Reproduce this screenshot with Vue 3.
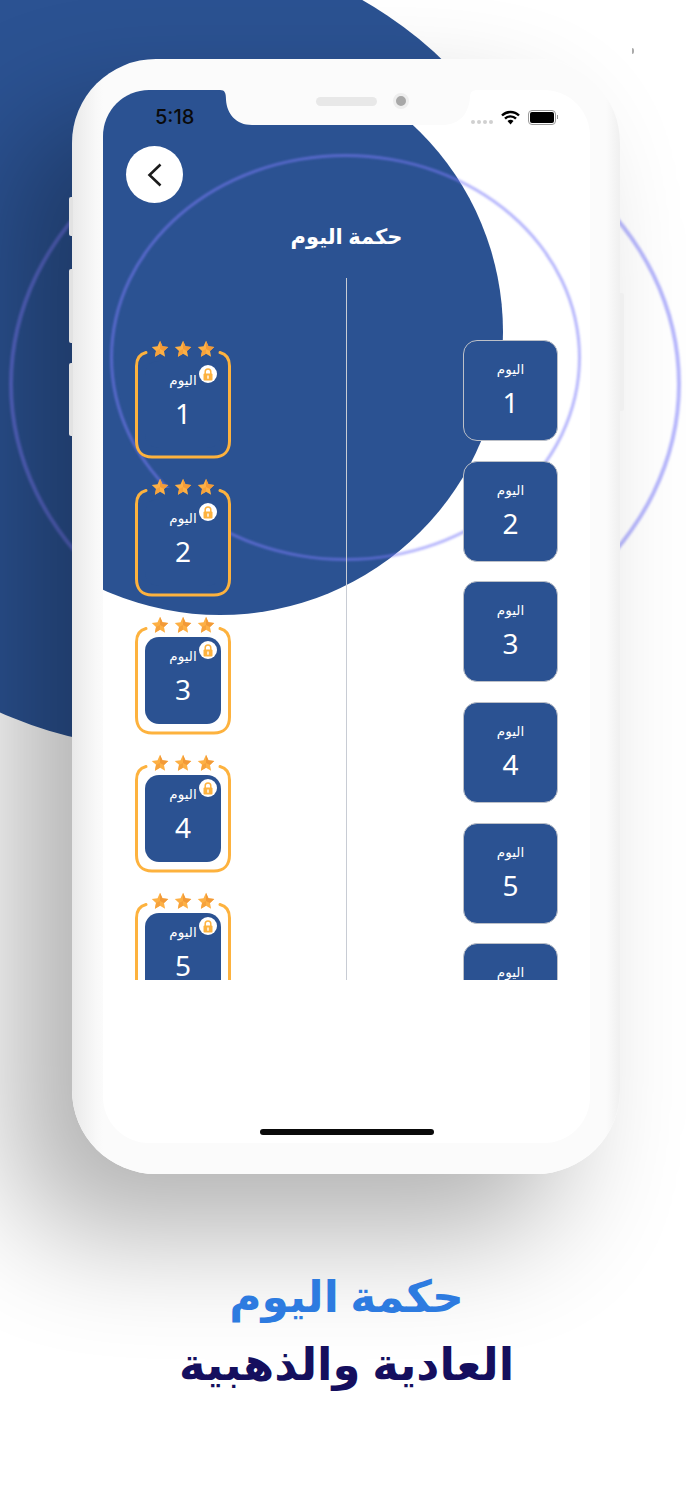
<script setup>
const golden = [1, 2, 3, 4, 5]
const regular = [1, 2, 3, 4, 5, 6]
</script>

<template>
  <div class="poster">
    <div class="big-circle"></div>
    <div class="ring-outer"></div>
    <div class="speck"></div>

    <div class="phone">
      <span class="side-btn btn-a"></span>
      <span class="side-btn btn-b"></span>
      <span class="side-btn btn-c"></span>
      <span class="side-btn btn-d"></span>

      <div class="screen">
        <div class="screen-circle"></div>
        <div class="ring-inner"></div>

        <svg class="notch" width="262" height="36" viewBox="0 0 262 36">
          <path d="M0 0H258C252 0 250 2 250 8C248 26 238 35 222 35H32C16 35 7 24 6 10C6 3 5 0 0 0Z" fill="#fbfbfb" />
        </svg>
        <span class="speaker"></span>
        <span class="camera"></span>

        <div class="status">
          <span class="time">5:18</span>
          <div class="status-right">
            <span class="signal"><i></i><i></i><i></i><i></i></span>
            <svg width="19" height="15" viewBox="0 0 19 15">
              <path d="M1 5.500a12 12 0 0 1 17 0" fill="none" stroke="#000" stroke-width="2.400" />
              <path d="M4 8.700a7.600 7.600 0 0 1 11 0" fill="none" stroke="#000" stroke-width="2.400" />
              <path d="M6.500 11a4 4 0 0 1 6 0L9.500 14.500Z" fill="#000" />
            </svg>
            <span class="battery"><i></i></span>
          </div>
        </div>

        <button class="back">
          <svg width="16" height="24" viewBox="0 0 16 24">
            <path d="M13.500 1.500L2.500 12L13.500 22.500" fill="none" stroke="#1c1c1c" stroke-width="2.600" />
          </svg>
        </button>

        <h1 class="title">حكمة اليوم</h1>

        <div class="columns">
          <div class="col-left">
            <div v-for="d in golden" :key="d" class="gold-card" :class="{ 'on-circle': d < 3 }">
              <svg class="frame" width="96" height="109" viewBox="0 0 96 109">
                <path d="M11 2.500C5 4 1.500 9 1.500 16V91C1.500 101 7 107 17 107H79C89 107 94.500 101 94.500 91V16C94.500 9 91 4 85 2.500" fill="none" stroke="#fdb23e" stroke-width="3" stroke-linecap="round" />
              </svg>
              <div class="stars">
                <svg v-for="s in 3" :key="s" width="18" height="18" viewBox="0 0 24 24">
                  <path d="M12 1l3.300 7.300 7.700.9-5.700 5.300 1.500 7.800L12 18.400l-6.800 3.900 1.500-7.800L1 9.200l7.700-.9z" fill="#fdb045" />
                  <path d="M12 1l3.300 7.300 7.700.9-5.700 5.300L12 12z" fill="#f29a38" />
                  <path d="M12 12l-5.300 2.500-1.500 7.800 6.800-3.900z" fill="#f6a23c" />
                </svg>
              </div>
              <div class="day gold-day">
                <span class="lock">
                  <svg width="10" height="13" viewBox="0 0 10 13">
                    <path d="M2.200 6V3.700a2.800 2.800 0 0 1 5.600 0V6" fill="none" stroke="#fdb23e" stroke-width="1.500" />
                    <rect x="0.500" y="5.500" width="9" height="7" rx="1" fill="#fdb23e" />
                    <rect x="4.300" y="7.500" width="1.400" height="3.200" fill="#fff" />
                  </svg>
                </span>
                <span class="day-label">اليوم</span>
                <span class="day-num">{{ d }}</span>
              </div>
            </div>
          </div>
          <div class="divider"></div>
          <div class="col-right">
            <div v-for="d in regular" :key="d" class="day plain-day">
              <span class="day-label">اليوم</span>
              <span v-if="d < 6" class="day-num">{{ d }}</span>
            </div>
          </div>
        </div>

        <div class="home-bar"></div>
      </div>
    </div>

    <div class="caption">
      <p class="cap-blue">حكمة اليوم</p>
      <p class="cap-dark">العادية والذهبية</p>
    </div>
  </div>
</template>

<style>
html,
body {
  margin: 0;
  background: #fff;
}
</style>

<style scoped>
.poster {
  position: relative;
  width: 693px;
  height: 1500px;
  overflow: hidden;
  background: #fff;
  padding-top: 59px;
  box-sizing: border-box;
  font-family: "Noto Sans", "DejaVu Sans", sans-serif;
}

.big-circle {
  position: absolute;
  left: -235px;
  top: -52px;
  width: 800px;
  height: 800px;
  border-radius: 50%;
  background: #2b5292;
}

.ring-outer {
  position: absolute;
  left: 9px;
  top: 98px;
  width: 664px;
  height: 564px;
  border: 4px solid rgba(123, 123, 250, 0.55);
  border-radius: 50%;
  filter: blur(1px);
}

.speck {
  position: absolute;
  left: 632px;
  top: 48px;
  width: 2px;
  height: 6px;
  background: #aaa;
  border-radius: 0 2px 2px 0;
}

.phone {
  position: relative;
  width: 548px;
  height: 1115px;
  margin-left: 72px;
  padding: 31px 30px 31px 31px;
  box-sizing: border-box;
  border-radius: 84px;
  background: linear-gradient(90deg, #e9e9e9 0, #f8f8f8 24px, #fbfbfb 31px, #fbfbfb calc(100% - 14px), #f0f0f0 100%);
  box-shadow: -60px 60px 120px rgba(0, 0, 0, 0.3);
}

.side-btn {
  position: absolute;
  left: -3px;
  width: 4px;
  background: #e2e2e2;
  border-radius: 2px 0 0 2px;
}

.btn-a {
  top: 138px;
  height: 39px;
}

.btn-b {
  top: 210px;
  height: 74px;
}

.btn-c {
  top: 304px;
  height: 73px;
}

.btn-d {
  left: auto;
  right: -4px;
  top: 234px;
  height: 118px;
  background: #efefef;
  border-radius: 0 2px 2px 0;
}

.screen {
  position: relative;
  height: 100%;
  border-radius: 46px;
  overflow: hidden;
  background: #fff;
}

.screen-circle {
  position: absolute;
  left: -166px;
  top: -41px;
  width: 566px;
  height: 566px;
  border-radius: 50%;
  background: #2b5292;
}

.ring-inner {
  position: absolute;
  left: 7px;
  top: 64px;
  width: 465px;
  height: 401px;
  border: 3px solid rgba(123, 123, 250, 0.55);
  border-radius: 50%;
  filter: blur(0.8px);
}

.notch {
  position: absolute;
  left: 117px;
  top: 0;
}

.speaker {
  position: absolute;
  left: 213px;
  top: 7px;
  width: 61px;
  height: 9px;
  border-radius: 5px;
  background: #e8e8e8;
}

.camera {
  position: absolute;
  left: 290px;
  top: 3px;
  width: 10px;
  height: 10px;
  border: 3px solid #eee;
  border-radius: 50%;
  background: #a8a8a8;
}

.status {
  position: relative;
  display: flex;
  justify-content: space-between;
  align-items: center;
  height: 38px;
  margin-top: 8px;
  padding: 0 31px 0 52px;
  box-sizing: border-box;
}

.time {
  font-family: Inter, sans-serif;
  font-size: 20px;
  font-weight: 500;
  color: #0a0a0a;
}

.status-right {
  display: flex;
  align-items: center;
  gap: 8px;
}

.signal {
  display: flex;
  gap: 2px;
  margin-top: 10px;
}

.signal i {
  width: 4px;
  height: 4px;
  background: #d0d0d0;
  border-radius: 50%;
}

.battery {
  position: relative;
  display: block;
  width: 24px;
  height: 11px;
  padding: 1px;
  border: 1px solid #999;
  border-radius: 4px;
  margin-right: 3px;
}

.battery::after {
  content: "";
  position: absolute;
  right: -3px;
  top: 4px;
  width: 1.500px;
  height: 4px;
  background: #999;
}

.battery i {
  display: block;
  height: 100%;
  background: #000;
  border-radius: 2px;
}

.back {
  position: relative;
  display: flex;
  align-items: center;
  justify-content: center;
  width: 57px;
  height: 57px;
  margin: 10px 0 0 23px;
  padding: 0;
  border: 0;
  border-radius: 50%;
  background: #fff;
}

.title {
  position: relative;
  margin: 15px 0 0;
  height: 36px;
  line-height: 36px;
  text-align: center;
  font-size: 21px;
  font-weight: 700;
  color: #fff;
}

.columns {
  position: relative;
  display: flex;
  height: 702px;
  margin-top: 24px;
  overflow: hidden;
}

.col-left {
  width: 243px;
  padding: 72px 0 0 32px;
  box-sizing: border-box;
}

.divider {
  flex: none;
  width: 1px;
  background: #c8ccd4;
}

.col-right {
  flex: 1;
  display: flex;
  flex-direction: column;
  align-items: flex-end;
  gap: 19.700px;
  padding: 62px 32px 0 0;
}

.gold-card {
  position: relative;
  width: 96px;
  height: 109px;
  margin-bottom: 29px;
  padding: 11px 10px;
  box-sizing: border-box;
  border-radius: 18px;
}

/* the ring stays behind the cards that sit on the blue circle */
.on-circle {
  background: #2b5292;
}

.frame {
  position: absolute;
  left: 0;
  top: 0;
}

.stars {
  position: absolute;
  left: 16px;
  top: -10px;
  display: flex;
  gap: 5px;
}

.day {
  position: relative;
  display: flex;
  flex-direction: column;
  align-items: center;
  box-sizing: border-box;
  background: #2b5292;
  color: #fff;
}

.gold-day {
  height: 87px;
  border-radius: 14px;
  padding-top: 9px;
}

.plain-day {
  flex: none;
  width: 95px;
  height: 101px;
  padding-top: 18px;
  border: 1px solid #bcc0c8;
  border-radius: 14px;
}

.lock {
  position: absolute;
  left: 54px;
  top: 4px;
  display: flex;
  align-items: center;
  justify-content: center;
  width: 18px;
  height: 18px;
  border-radius: 50%;
  background: #fff;
}

.day-label {
  font-size: 13.500px;
  line-height: 20px;
}

.day-num {
  margin-top: 5px;
  font-size: 28px;
  line-height: 36px;
}

.home-bar {
  position: absolute;
  left: 157px;
  bottom: 8px;
  width: 174px;
  height: 6px;
  border-radius: 3px;
  background: #0a0a0a;
}

.caption {
  margin-top: 87px;
  text-align: center;
}

.caption p {
  position: relative;
  margin: 0;
  height: 68px;
  line-height: 68px;
  font-weight: 700;
}

.cap-blue {
  font-size: 44px;
  color: #2d7be0;
}

.cap-dark {
  font-size: 45px;
  color: #150f5e;
}
</style>
